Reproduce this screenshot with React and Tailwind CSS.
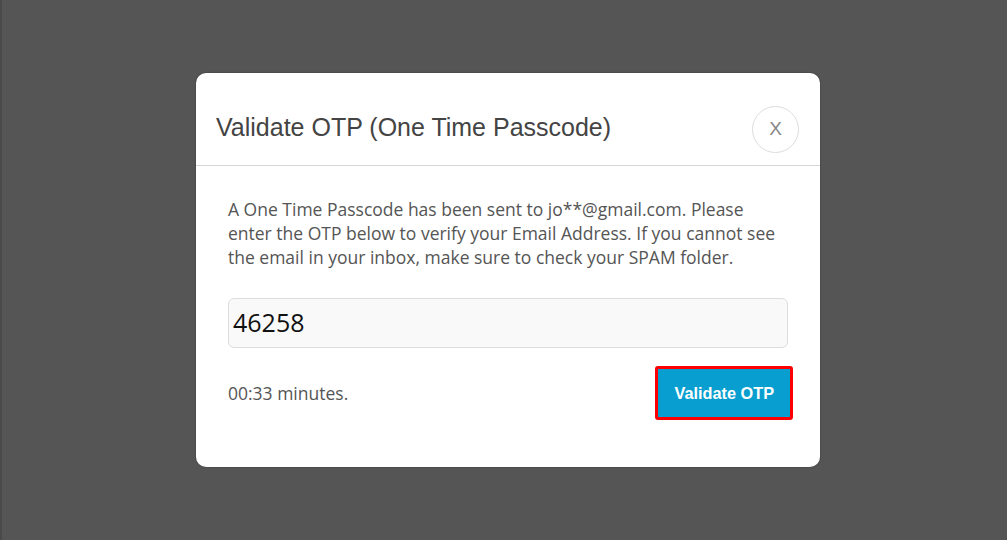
export default function App() {
  return (
    <div className="min-h-[540px] w-full bg-[#555555] pt-[73px] pl-[194px] border-l-2 border-[#4a4a4a]">
      <div className="w-[624px] rounded-[10px] bg-white shadow-[0_0_2px_rgba(0,0,0,0.4)]">
        <div className="flex h-[93px] items-center justify-between border-b border-[#d6d6d6] pt-[16px] pl-[20px] pr-[21px]">
          <h1 className="font-['Liberation_Sans',Arial,sans-serif] text-[25px] leading-[30px] text-[#444444]">
            Validate OTP (One Time Passcode)
          </h1>
          <button className="mt-[4px] flex h-[47px] w-[47px] items-center justify-center rounded-full border border-[#dddddd] font-['Liberation_Sans',Arial,sans-serif] text-[19px] text-[#888888]">
            X
          </button>
        </div>
        <div className="px-[32px] pt-[31px] pb-[47px] font-['Open_Sans',sans-serif] text-[#555555]">
          <p className="text-[17.5px] leading-[24px]">
            A One Time Passcode has been sent to jo**@gmail.com. Please enter the
            OTP below to verify your Email Address. If you cannot see the email in
            your inbox, make sure to check your SPAM folder.
          </p>
          <div className="mt-[29px] flex h-[50px] w-[560px] items-center rounded-[6px] border border-[#dddddd] bg-[#f9f9f9] px-[4px] text-[25px] text-[#111111]">
            46258
          </div>
          <div className="mt-[18px] flex items-center justify-between">
            <span className="text-[17.5px] text-[#555555]">00:33 minutes.</span>
            <button className="mr-[-5px] rounded-[3px] border-[3px] border-[#ff0000] bg-[#089fd0] px-[16px] py-[14px] font-['Liberation_Sans',Arial,sans-serif] text-[16.3px] leading-[20px] font-bold text-white">
              Validate OTP
            </button>
          </div>
        </div>
      </div>
    </div>
  );
}
